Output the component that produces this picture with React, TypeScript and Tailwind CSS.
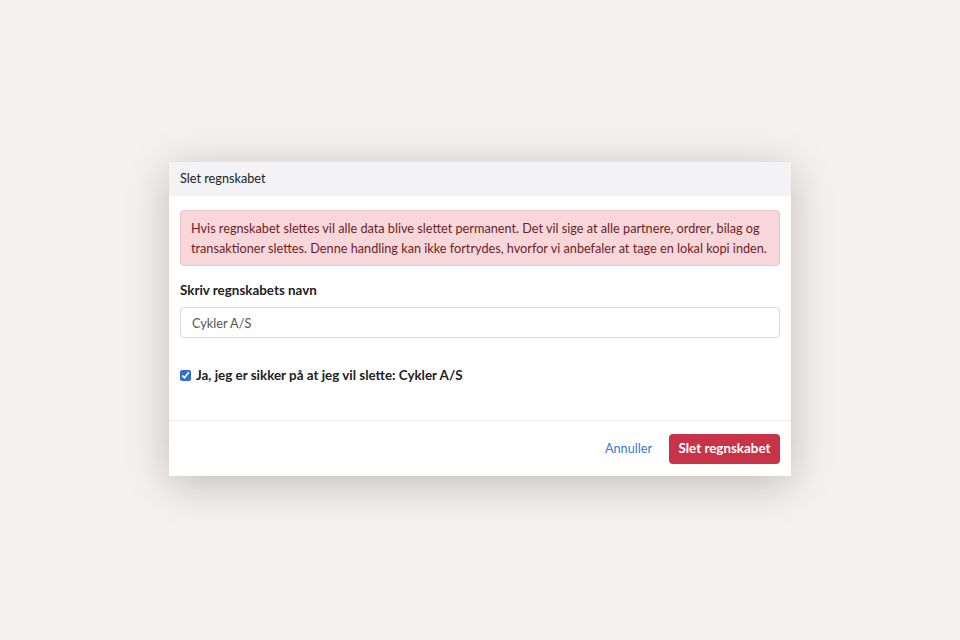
export default function App() {
  return (
    <div className="w-[960px] h-[640px] bg-[#f5f1ee] flex items-start justify-center pt-[162px]" style={{ fontFamily: 'Lato, "Noto Sans", sans-serif' }}>
      <div className="w-[622px] bg-white shadow-[0_8px_40px_rgba(0,0,0,0.22)]">
        <div className="h-[34px] bg-[#f3f3f5] flex items-center px-[11px] text-[12.7px] text-[#222]">Slet regnskabet</div>
        <div className="px-[11px] pt-[14px] pb-[35px]">
          <div className="bg-[#f8d7da] border border-[#f1c1c6] rounded-[4px] text-[#6b1f28] text-[12.7px] leading-[20px] px-[10px] py-[7px]">
            Hvis regnskabet slettes vil alle data blive slettet permanent. Det vil sige at alle partnere, ordrer, bilag og transaktioner slettes. Denne handling kan ikke fortrydes, hvorfor vi anbefaler at tage en lokal kopi inden.
          </div>
          <div className="mt-[14px] text-[13.4px] leading-[20px] font-bold text-[#222]">Skriv regnskabets navn</div>
          <input className="mt-[7px] w-full h-[31px] border border-[#d8d8d8] rounded-[4px] px-[11px] text-[12.7px] text-[#555] outline-none" defaultValue="Cykler A/S" />
          <label className="mt-[27px] flex items-center gap-[5px] text-[13.4px] leading-[20px] font-bold text-[#222]">
            <input type="checkbox" defaultChecked className="w-[11px] h-[11px] accent-[#2f6fd6]" />
            Ja, jeg er sikker på at jeg vil slette: Cykler A/S
          </label>
        </div>
        <div className="border-t border-[#eeeeee] h-[56px] flex items-center justify-end gap-[17px] px-[11px]">
          <button className="text-[12.7px] text-[#3a78d8]">Annuller</button>
          <button className="h-[30px] px-[9.5px] rounded-[4px] bg-[#c9334a] text-white text-[13.4px] font-bold">Slet regnskabet</button>
        </div>
      </div>
    </div>
  );
}
